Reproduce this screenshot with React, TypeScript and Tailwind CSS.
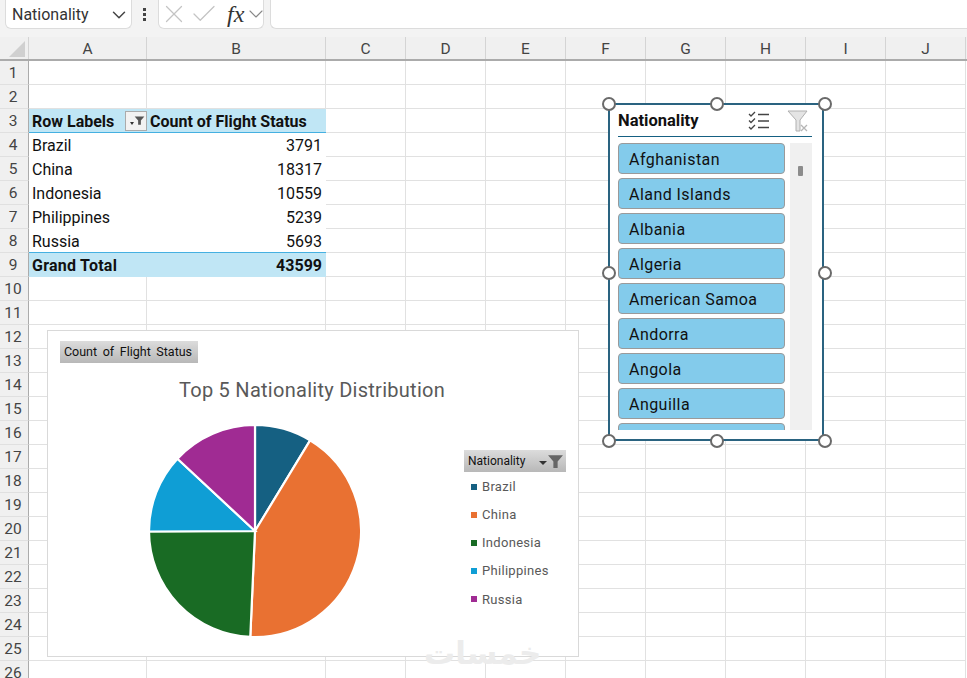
import React from 'react';
import { Check, ChevronDown, X } from 'lucide-react';

const cols = [
  { name: 'A', w: 118 },
  { name: 'B', w: 179 },
  { name: 'C', w: 80 },
  { name: 'D', w: 80 },
  { name: 'E', w: 80 },
  { name: 'F', w: 80 },
  { name: 'G', w: 80 },
  { name: 'H', w: 80 },
  { name: 'I', w: 80 },
  { name: 'J', w: 80 },
];
const rows = Array.from({ length: 26 }, (_, i) => i + 1);

const pivot: Record<number, [string, string]> = {
  4: ['Brazil', '3791'],
  5: ['China', '18317'],
  6: ['Indonesia', '10559'],
  7: ['Philippines', '5239'],
  8: ['Russia', '5693'],
};

const slices = [
  { name: 'Brazil', value: 3791, color: '#156082', dot: 'bg-[#156082]' },
  { name: 'China', value: 18317, color: '#e97132', dot: 'bg-[#e97132]' },
  { name: 'Indonesia', value: 10559, color: '#196b24', dot: 'bg-[#196b24]' },
  { name: 'Philippines', value: 5239, color: '#0f9ed5', dot: 'bg-[#0f9ed5]' },
  { name: 'Russia', value: 5693, color: '#a02b93', dot: 'bg-[#a02b93]' },
];

const countries = ['Afghanistan', 'Aland Islands', 'Albania', 'Algeria', 'American Samoa', 'Andorra', 'Angola', 'Anguilla', ''];

function PieChart() {
  const total = slices.reduce((s, x) => s + x.value, 0);
  let acc = 0;
  const R = 106;
  const c = 108;
  return (
    <svg width="216" height="216" viewBox="0 0 216 216">
      {slices.map((s) => {
        const a0 = (acc / total) * Math.PI * 2;
        acc += s.value;
        const a1 = (acc / total) * Math.PI * 2;
        const large = a1 - a0 > Math.PI ? 1 : 0;
        const d = `M${c} ${c} L${c + R * Math.sin(a0)} ${c - R * Math.cos(a0)} A${R} ${R} 0 ${large} 1 ${c + R * Math.sin(a1)} ${c - R * Math.cos(a1)} Z`;
        return <path key={s.name} d={d} fill={s.color} stroke="#fff" strokeWidth="2.2" />;
      })}
    </svg>
  );
}

function FilterIcon({ className }: { className?: string }) {
  return (
    <svg viewBox="0 0 16 16" className={className}>
      <path d="M1 2h14l-5 6v6H6V8z" fill="currentColor" />
    </svg>
  );
}

function Handle({ className }: { className: string }) {
  return <div className={`absolute w-[14px] h-[14px] rounded-full bg-white border-[2.5px] border-[#6a6a6a] ${className}`} />;
}

function Slicer() {
  return (
    <div className="absolute left-[608px] top-[103px] w-[216px] h-[338px] bg-white border-2 border-[#2a6380] flex flex-col pl-[8px] pr-[10px]">
      <div className="flex items-center h-[32px] border-b border-[#156082] shrink-0 mb-[6px]">
        <span className="font-bold text-[16.5px] text-[#111] pt-[1px]">Nationality</span>
        <svg viewBox="0 0 22 20" className="w-[22px] h-[20px] ml-auto text-[#444]" fill="none" stroke="currentColor" strokeWidth="1.3">
          <path d="M1 3l2 2 4-4M1 9.5l2 2 4-4M1 16l2 2 4-4" />
          <path d="M10 3.5h11M10 10h11M10 16.5h11" strokeWidth="1.6" />
        </svg>
        <svg viewBox="0 0 22 22" className="w-[22px] h-[22px] ml-[17px] mr-[3px]">
          <path d="M1 1h19l-7 9v11h-4V10z" fill="#e4e4e4" stroke="#b0b0b0" strokeWidth="1" />
          <path d="M14 15l6 6M20 15l-6 6" stroke="#b5b5b5" strokeWidth="1.3" />
        </svg>
      </div>
      <div className="flex gap-[5px] h-[287px] overflow-hidden">
        <div className="w-[167px] flex flex-col gap-[4px] overflow-hidden">
          {countries.map((c, i) => (
            <div key={i} className="h-[31px] shrink-0 rounded-[4px] bg-[#83cbeb] border border-[#9a9a9a] pl-[10px] pt-[3px] flex items-center text-[16px] text-[#111] tracking-[0.45px]">
              {c}
            </div>
          ))}
        </div>
        <div className="w-[22px] bg-[#f0f0f0] flex justify-center pt-[23px] pr-[1px]">
          <div className="w-[5px] h-[10px] bg-[#8c8c8c] rounded-[1px]" />
        </div>
      </div>
      <Handle className="-left-[8px] -top-[8px]" />
      <Handle className="left-[100px] -top-[8px]" />
      <Handle className="-right-[10px] -top-[8px]" />
      <Handle className="-left-[8px] top-[161px]" />
      <Handle className="-right-[10px] top-[161px]" />
      <Handle className="-left-[8px] -bottom-[9px]" />
      <Handle className="left-[100px] -bottom-[9px]" />
      <Handle className="-right-[10px] -bottom-[9px]" />
    </div>
  );
}

function Chart() {
  return (
    <div className="absolute left-[47px] top-[330px] w-[532px] h-[327px] bg-white border border-[#d9d9d9] flex flex-col pl-[12px] pt-[10px]">
      <div className="w-[138px] h-[22px] bg-gradient-to-b from-[#dcdcdc] to-[#b8b8b8] flex items-center justify-center pr-[2px] text-[12.5px] text-[#111] [word-spacing:2.5px]">
        Count of Flight Status
      </div>
      <div className="text-center text-[20px] leading-[26px] text-[#595959] mt-[14px] pr-[14px] tracking-[0.27px]">
        Top 5 Nationality Distribution
      </div>
      <div className="flex">
        <div className="ml-[87px] mt-[20px]">
          <PieChart />
        </div>
        <div className="ml-[101px] mt-[47px] w-[102px]">
          <div className="h-[22px] bg-gradient-to-b from-[#dcdcdc] to-[#b8b8b8] flex items-center pl-[4px] pr-[2px] text-[12px] text-[#111]">
            Nationality
            <span className="ml-auto flex items-center text-[#666]">
              <span className="w-0 h-0 border-x-[4px] border-x-transparent border-t-[4px] border-t-[#333] mt-[4px]" />
              <FilterIcon className="w-[17px] h-[17px]" />
            </span>
          </div>
          <div className="flex flex-col gap-[11.2px] mt-[6px] pl-[7px]">
            {slices.map((s) => (
              <div key={s.name} className="flex items-center h-[17px] text-[13px] text-[#595959] tracking-[0.3px]">
                <span className={`w-[6px] h-[6px] mr-[5px] ${s.dot}`} />
                {s.name}
              </div>
            ))}
          </div>
        </div>
      </div>
    </div>
  );
}

function GridRow({ n }: { n: number }) {
  const isHead = n === 3;
  const isTotal = n === 9;
  const inPivot = n >= 3 && n <= 9;
  const blueBottom = n === 3 || n === 8;
  const pivotFill = isHead || isTotal ? 'bg-[#c0e6f5] font-bold' : 'bg-white';
  const pivotBorder = blueBottom ? 'border-b border-[#45b0e1]' : isTotal ? 'border-b border-[#c0e6f5]' : 'border-b border-white';
  return (
    <div className="flex h-[24px] shrink-0">
      <div className="w-[29px] shrink-0 bg-[#f0f0f0] border-r border-b border-r-[#ababab] border-b-[#e0e0e0] flex items-center justify-center pt-[2px] pr-[2px] text-[15.5px] text-[#444]">
        {n}
      </div>
      {inPivot ? (
        <div className={`w-[297px] shrink-0 flex items-center pl-[3px] pr-[4px] text-[16px] text-[#111] ${pivotFill} ${pivotBorder}`}>
          {isHead && (
            <>
              <span className="w-[93px] pt-[3px]">Row Labels</span>
              <span className="w-[22px] h-[20px] bg-[#f2f2f2] border border-[#ababab] flex items-center justify-center pl-[2px] text-[#555]">
                <span className="w-0 h-0 border-x-[2.5px] border-x-transparent border-t-[3px] border-t-[#333] mt-[5px]" />
                <FilterIcon className="w-[11px] h-[11px]" />
              </span>
              <span className="ml-[3px] pt-[3px]">Count of Flight Status</span>
            </>
          )}
          {pivot[n] && (
            <>
              <span className="pt-[3px]">{pivot[n][0]}</span>
              <span className="ml-auto pt-[3px]">{pivot[n][1]}</span>
            </>
          )}
          {isTotal && (
            <>
              <span className="pt-[3px] tracking-[0.25px]">Grand Total</span>
              <span className="ml-auto pt-[3px]">43599</span>
            </>
          )}
        </div>
      ) : (
        cols.slice(0, 2).map((c) => (
          <div key={c.name} className="shrink-0 border-r border-b border-[#e1e1e1]" style={{ width: c.w }} />
        ))
      )}
      {cols.slice(2).map((c) => (
        <div key={c.name} className="shrink-0 border-r border-b border-[#e1e1e1]" style={{ width: c.w }} />
      ))}
    </div>
  );
}

export default function App() {
  return (
    <div className="relative w-[967px] h-[678px] overflow-hidden bg-white font-['Roboto',sans-serif]">
      {/* formula bar */}
      <div className="h-[37px] bg-[#f3f3f3] flex pl-[5px]">
        <div className="w-[127px] h-[29px] bg-white border border-[#dcdcdc] border-t-0 rounded-b-[6px] flex items-center pl-[6px] pr-[1px] pt-[1px] text-[16px] text-[#333]">
          Nationality
          <ChevronDown className="ml-auto w-[22px] h-[22px] text-[#444]" strokeWidth={1.6} />
        </div>
        <div className="w-[19px] h-[29px] ml-[3px] flex flex-col items-center justify-center gap-[2px]">
          <span className="w-[3px] h-[3px] bg-[#444]" />
          <span className="w-[3px] h-[3px] bg-[#444]" />
          <span className="w-[3px] h-[3px] bg-[#444]" />
        </div>
        <div className="w-[106px] h-[29px] ml-[4px] bg-white border border-[#dcdcdc] border-t-0 rounded-b-[6px] flex items-center text-[#c4c4c4]">
          <X className="w-[30px] h-[30px] shrink-0" strokeWidth={1} />
          <Check className="w-[30px] h-[30px] shrink-0" strokeWidth={1} />
          <span className="ml-[8px] font-['Liberation_Serif',serif] italic text-[24px] leading-none text-[#333]">fx</span>
          <ChevronDown className="w-[24px] h-[24px] shrink-0 text-[#888]" strokeWidth={1.1} />
        </div>
        <div className="flex-1 h-[29px] ml-[6px] bg-white border border-[#dcdcdc] border-t-0 border-r-0 rounded-bl-[6px]" />
      </div>

      {/* column headers */}
      <div className="flex h-[24px] bg-[#f0f0f0] border-b-2 border-[#ababab]">
        <div className="w-[29px] shrink-0 border-r border-[#d4d4d4] flex items-end justify-end pr-[3px] pb-[2px]">
          <div className="w-0 h-0 border-l-[16px] border-l-transparent border-b-[16px] border-b-[#d0d0d0]" />
        </div>
        {cols.map((c) => (
          <div key={c.name} className="shrink-0 border-r border-[#d4d4d4] flex items-center justify-center pt-[3px] text-[15.5px] text-[#444]" style={{ width: c.w }}>
            {c.name}
          </div>
        ))}
      </div>

      {rows.map((n) => (
        <GridRow key={n} n={n} />
      ))}

      <Chart />
      <Slicer />

      {/* watermark */}
      <div dir="rtl" className="absolute left-[424px] top-[631px] text-[31px] leading-[44px] font-bold text-[#ececec] font-['DejaVu_Sans',sans-serif]">
        خمسات
      </div>
    </div>
  );
}
